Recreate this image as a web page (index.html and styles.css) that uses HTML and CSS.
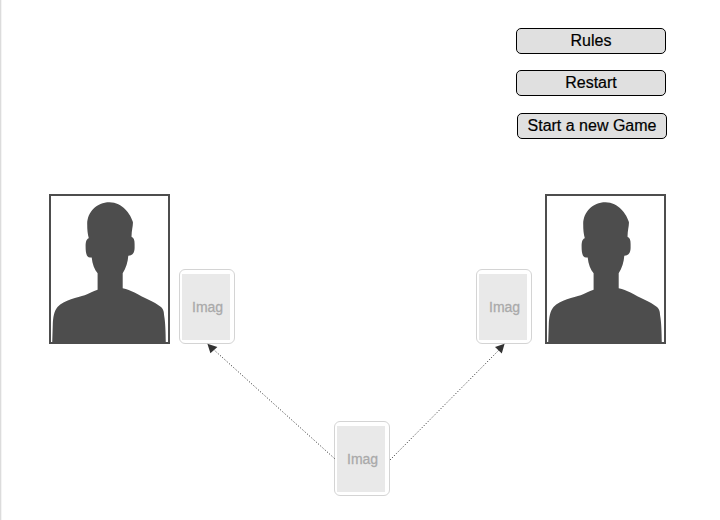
FILE: index.html
```
<!DOCTYPE html>
<html lang="en">
<head>
<meta charset="utf-8">
<title>Card Game</title>
<link rel="stylesheet" href="styles.css">
</head>
<body>
<svg class="defs" width="0" height="0" aria-hidden="true">
  <symbol id="person" viewBox="0 0 121 150">
    <path d="M60.5 8.2C47.5 8.2 38.3 18 38.2 30C38.2 36 38.6 40 39.8 44.3C37.4 45 36.6 48 36.6 52C36.6 59 37.4 63.3 41 63.4L42.7 63.4C43.3 70 45.5 75.5 48.6 79.2V95.7C44 97 39.5 99.6 35.7 101.3C29 103.5 15 106 8.5 113C5 117 4 124 3.8 130L3.2 149H116.8C116.7 138 116.3 128 115.2 122C114.8 118 114.8 115.5 112 113C106 108 94 103.5 85.5 98.5C81.5 96.8 78 95.3 73.7 94.3V79.2C77 74 78.8 68.5 79.3 61.7C83.5 61.8 85.6 58.5 85.6 54V50C85.6 46 84.8 43.4 82.6 43C82.3 37 84.2 32 83.9 28C81.5 20 73.5 8.2 60.5 8.2Z"/>
  </symbol>
</svg>
<main class="board">
  <nav class="menu">
    <button class="menu-button">Rules</button>
    <button class="menu-button">Restart</button>
    <button class="menu-button menu-button-new">Start a new Game</button>
  </nav>
  <section class="players">
    <div class="player">
      <div class="avatar"><svg class="portrait"><use href="#person"/></svg></div>
      <div class="card"><div class="card-face">Imag</div></div>
    </div>
    <div class="player player-right">
      <div class="card"><div class="card-face">Imag</div></div>
      <div class="avatar"><svg class="portrait"><use href="#person"/></svg></div>
    </div>
  </section>
  <div class="deck">
    <div class="card"><div class="card-face">Imag</div></div>
  </div>
  <svg class="arrows" width="720" height="520" aria-hidden="true">
    <path class="arrow-line" d="M334.5 458.5L213 349M390 460L499 350"/>
    <path class="arrow-head" d="M207.4 343.8L217.4 347L210.4 353.2ZM504.6 343.8L495 347L501.8 353.6Z"/>
  </svg>
</main>
</body>
</html>
```
FILE: styles.css
```
* {
  box-sizing: border-box;
}

body {
  margin: 0;
  background: #fff;
  font-family: "Liberation Sans", Arial, sans-serif;
}

.defs {
  display: block;
}

.board {
  position: relative;
  display: flex;
  flex-direction: column;
  width: 720px;
  height: 520px;
  padding: 28px 54px 0 48px;
  border-left: 1px solid #dcdcdc;
  box-shadow: inset 1px 0 #f4f4f4;
  overflow: hidden;
}

.menu {
  display: flex;
  flex-direction: column;
  align-items: flex-end;
  gap: 16px;
}

.menu-button {
  width: 150px;
  height: 26px;
  padding: 0;
  border: 1px solid #000;
  border-radius: 5px;
  background: #e0e0e0;
  color: #000;
  font: 16px/24px "Liberation Sans", Arial, sans-serif;
  -webkit-text-stroke: 0.2px #000;
  white-space: nowrap;
}

.menu-button-new {
  margin: 1px -1px 0 0;
}

.players {
  display: flex;
  justify-content: space-between;
  margin-top: 55px;
}

.player {
  display: flex;
  align-items: flex-end;
  gap: 9px;
}

.player-right {
  gap: 13px;
}

.avatar {
  width: 121px;
  height: 150px;
  border: 2px solid #4d4d4d;
}

.portrait {
  display: block;
  width: 121px;
  height: 150px;
  margin: -2px;
  fill: #4d4d4d;
}

.card {
  width: 56px;
  height: 75px;
  padding: 4px 0 0 2px;
  border: 1px solid #d4d4d4;
  border-radius: 6px;
  background: #fff;
}

.card-face {
  width: 48px;
  height: 66px;
  padding-left: 10px;
  background: #e9e9e9;
  color: #aaa;
  font-size: 14px;
  line-height: 67px;
  -webkit-text-stroke: 0.3px #aaa;
}

.deck {
  margin: 77px 0 0 285px;
}

.arrows {
  position: absolute;
  top: 0;
  left: -1px;
}

.arrow-line {
  fill: none;
  stroke: #222;
  stroke-width: 1;
  stroke-dasharray: 1 2;
}

.arrow-head {
  fill: #333;
}
```
